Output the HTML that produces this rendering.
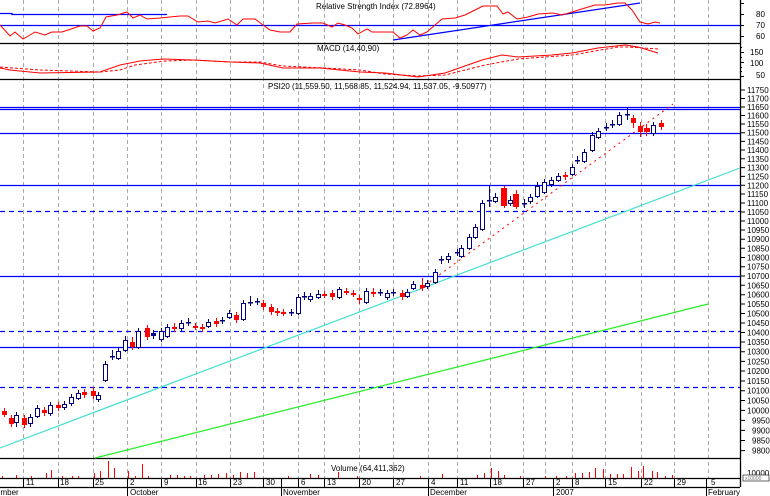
<!DOCTYPE html>
<html><head><meta charset="utf-8"><style>
html,body{margin:0;padding:0;background:#fff;}
svg{display:block;font-family:"Liberation Sans",sans-serif;}
text{font-size:8px;fill:#000;}
</style></head><body>
<svg width="770" height="496" viewBox="0 0 770 496" xmlns="http://www.w3.org/2000/svg">
<rect width="770" height="496" fill="#fff"/>
<!-- vertical grid -->
<g stroke="#aaa" stroke-dasharray="4,3" stroke-width="1">
<path d="M23.5 0V478M58.5 0V478M93.5 0V478M127.5 0V478M161.5 0V478M196.5 0V478M230.5 0V478M263.5 0V478M298.5 0V478M324.5 0V478M359.5 0V478M393.5 0V478M428.5 0V478M457.5 0V478M490.5 0V478M523.5 0V478M545.5 0V478M572.5 0V478M605.5 0V478M641.5 0V478M674.5 0V478M708.5 0V478"/>
</g>
<!-- panel separators -->
<g stroke="#000" stroke-width="1.3">
<path d="M0 43.5H740M0 79.5H740M0 458.5H740M0 478.5H740M0 487.5H740M740.5 0V487"/>
</g>
<!-- RSI -->
<text x="316" y="9">Relative Strength Index (72.8964)</text>
<g stroke="#0000ff" stroke-width="1.3" fill="none">
<path d="M0 25.5H740M0 13.5H12L12 14.5H167M393 40L640 3"/>
</g>
<polyline fill="none" stroke="#f00" stroke-width="1" points="0,25 10,36 15,32 23,39 35,32 45,35 52,32 62,32 80,26 87,26 93,31 100,28 106,17 117,15 127,12 133,18 140,15 147,19 160,18 180,16 188,16 198,22 208,21 215,23 228,19 237,25 243,19 255,19 263,25 270,30 280,32 290,32 297,24 313,23 323,23 332,27 338,23 345,25 352,28 358,34 367,29 372,32 385,32 393,32 400,38 407,35 413,30 420,35 427,32 435,25 442,19 455,18 465,15 475,10 483,6 497,6 503,14 508,12 517,19 528,17 538,14 553,13 562,15 572,12 585,8 595,5 605,5 618,3 625,3 632,10 640,22 648,24 655,22 660,23"/>
<text x="756" y="17">80</text><text x="756" y="28">70</text><text x="756" y="39">60</text>
<path d="M740 3.5h4M740 14.5h4M740 25.5h4M740 36.5h4" stroke="#000"/>
<!-- MACD -->
<text x="317" y="51">MACD (14,40,90)</text>
<polyline fill="none" stroke="#f00" stroke-width="1" points="0,68 10,70 40,73 100,72 120,65 140,61 163,59 193,60 230,62 260,63 283,68 320,68 360,72 385,73 418,77 445,73 482,60 502,55 518,57 552,55 572,53 598,48 625,45 638,47 658,53"/>
<polyline fill="none" stroke="#f00" stroke-width="1" stroke-dasharray="3,2" points="0,67 40,70 100,72 120,70 135,65 165,61 195,60 230,62 260,62 283,66 325,68 360,70 385,74 418,76 445,75 485,65 518,59 572,55 618,47 628,47 658,49"/>
<text x="750" y="55">150</text><text x="750" y="66">100</text><text x="756" y="78">50</text>
<path d="M740 52.5h4M740 62.5h4M740 76.5h4M740 47.5h2M740 57.5h2M740 67.5h2M740 71.5h2" stroke="#000"/>
<!-- Price -->
<text x="268" y="89">PSI20 (11,559.50, 11,568.85, 11,524.94, 11,537.05, -9.50977)</text>
<g stroke="#0000ff" stroke-width="1.3" fill="none">
<path d="M0 107.5H740M0 109.5H740M0 133.5H740M0 185.5H740M0 276.5H740M0 347.5H740"/>
<path d="M0 211.5H740M0 331.5H740M0 387.5H740" stroke-dasharray="5,4"/>
</g>
<path d="M0 448L740 168" stroke="#40e0d0" stroke-width="1.2" fill="none"/>
<path d="M95 458L708 304" stroke="#22ee22" stroke-width="1.2" fill="none"/>
<path d="M420 289L673 104" stroke="#f00" stroke-width="1" stroke-dasharray="2,4" fill="none"/>
<!-- wicks -->
<path stroke="#000080" stroke-width="1" fill="none" d="M16.5 412V427M30.5 414V427M37.5 405V418M50.5 402V416M64.5 401V410M71.5 394V406M78.5 390V400M98.5 392V402M105.5 361V382M112.5 350V360M118.5 348V360M125.5 336V352M138.5 328V349M153.5 330V339M161.5 328V342M167.5 324V338M181.5 320V331M188.5 318V326M208.5 319V328M222.5 317V324M229.5 310V319M243.5 300V321M250.5 296V306M257.5 298V305M291.5 309V316M298.5 294V315M304.5 292V300M310.5 293V302M318.5 290V299M339.5 287V299M366.5 288V304M380.5 289V296M387.5 290V300M393.5 289V296M407.5 289V298M413.5 281V290M427.5 280V289M435.5 269V284M441.5 256V264M448.5 253V263M457.5 249V256M461.5 245V258M469.5 234V250M475.5 224V239M482.5 200V231M489.5 186V207M495.5 193V203M510.5 196V206M524.5 199V208M530.5 194V204M537.5 182V198M544.5 179V194M551.5 177V187M558.5 173V182M572.5 164V176M577.5 156V164M584.5 149V163M592.5 132V152M598.5 128V139M606.5 123V131M612.5 120V128M619.5 112V126M627.5 108V120M653.5 122V136"/>
<path stroke="#f00" stroke-width="1" fill="none" d="M4.5 408V417M11.5 415V427M24.5 415V428M44.5 407V416M58.5 402V411M84.5 389V398M93.5 387V399M132.5 337V350M147.5 325V340M174.5 323V332M195.5 323V330M202.5 324V332M216.5 318V327M236.5 312V323M263.5 300V310M271.5 304V315M277.5 308V316M283.5 309V316M324.5 291V298M332.5 290V300M346.5 288V295M353.5 290V297M359.5 295V304M373.5 288V297M402.5 290V300M422.5 278V291M504.5 186V208M516.5 190V209M565.5 172V180M633.5 115V128M640.5 122V137M646.5 124V136M661.5 120V130"/>
<!-- red bodies -->
<g fill="#f00">
<rect x="2" y="411" width="5" height="4"/><rect x="9" y="418" width="5" height="6"/><rect x="22" y="418" width="5" height="7"/><rect x="42" y="410" width="5" height="3"/><rect x="56" y="405" width="5" height="3"/><rect x="82" y="392" width="5" height="3"/><rect x="91" y="391" width="5" height="5"/><rect x="130" y="342" width="5" height="5"/><rect x="145" y="328" width="5" height="9"/><rect x="172" y="327" width="5" height="2"/><rect x="193" y="326" width="5" height="2"/><rect x="200" y="327" width="5" height="2"/><rect x="214" y="321" width="5" height="3"/><rect x="234" y="315" width="5" height="5"/><rect x="261" y="303" width="5" height="4"/><rect x="269" y="307" width="5" height="5"/><rect x="275" y="311" width="5" height="2"/><rect x="281" y="312" width="5" height="2"/><rect x="322" y="294" width="5" height="2"/><rect x="330" y="293" width="5" height="4"/><rect x="344" y="291" width="5" height="2"/><rect x="351" y="293" width="5" height="2"/><rect x="357" y="298" width="5" height="2"/><rect x="371" y="292" width="5" height="2"/><rect x="400" y="293" width="5" height="4"/><rect x="420" y="285" width="5" height="3"/><rect x="501" y="188" width="6" height="18"/><rect x="513" y="194" width="6" height="13"/><rect x="563" y="175" width="5" height="2"/><rect x="631" y="118" width="5" height="5"/><rect x="638" y="126" width="5" height="6"/><rect x="644" y="128" width="6" height="4"/><rect x="659" y="123" width="5" height="4"/>
</g>
<!-- navy filled -->
<g fill="#000080">
<rect x="110" y="356" width="5" height="1.5"/><rect x="151" y="333" width="5" height="3"/><rect x="186" y="322" width="5" height="1.5"/><rect x="220" y="320" width="5" height="1.5"/><rect x="248" y="302" width="5" height="1.5"/><rect x="255" y="301" width="5" height="1.5"/><rect x="289" y="312" width="5" height="1.5"/><rect x="302" y="296" width="5" height="1.5"/><rect x="378" y="292" width="5" height="1.5"/><rect x="391" y="292" width="5" height="1.5"/><rect x="439" y="259" width="5" height="1.5"/><rect x="455" y="252" width="5" height="1.5"/><rect x="487" y="200" width="5" height="1.5"/><rect x="522" y="203" width="5" height="1.5"/><rect x="575" y="160" width="5" height="1.5"/><rect x="604" y="127" width="5" height="1.5"/><rect x="610" y="124" width="5" height="1.5"/><rect x="625" y="114" width="5" height="1.5"/>
</g>
<!-- hollow bodies -->
<g fill="#fff" stroke="#000080" stroke-width="1">
<rect x="14.5" y="415.5" width="4" height="7"/><rect x="28.5" y="417.5" width="4" height="6"/><rect x="35.5" y="408.5" width="4" height="8"/><rect x="48.5" y="405.5" width="4" height="8"/><rect x="62.5" y="404.5" width="4" height="3"/><rect x="69.5" y="397.5" width="4" height="6"/><rect x="76.5" y="393.5" width="4" height="5"/><rect x="96.5" y="395.5" width="4" height="4"/><rect x="103.5" y="364.5" width="4" height="16"/><rect x="116.5" y="351.5" width="4" height="7"/><rect x="123.5" y="340.5" width="4" height="10"/><rect x="136.5" y="331.5" width="4" height="16"/><rect x="159.5" y="331.5" width="4" height="8"/><rect x="165.5" y="327.5" width="4" height="9"/><rect x="179.5" y="323.5" width="4" height="5"/><rect x="206.5" y="322.5" width="4" height="4"/><rect x="227.5" y="313.5" width="4" height="4"/><rect x="241.5" y="303.5" width="4" height="16"/><rect x="296.5" y="297.5" width="4" height="16"/><rect x="308.5" y="296.5" width="4" height="3"/><rect x="316.5" y="294.5" width="4" height="3"/><rect x="337.5" y="289.5" width="4" height="8"/><rect x="364.5" y="291.5" width="4" height="11"/><rect x="385.5" y="293.5" width="4" height="4"/><rect x="405.5" y="292.5" width="4" height="4"/><rect x="411.5" y="284.5" width="4" height="4"/><rect x="425.5" y="283.5" width="4" height="3"/><rect x="433.5" y="272.5" width="4" height="10"/><rect x="446.5" y="256.5" width="4" height="3"/><rect x="459.5" y="248.5" width="4" height="8"/><rect x="467.5" y="237.5" width="4" height="11"/><rect x="473.5" y="227.5" width="4" height="10"/><rect x="480.5" y="203.5" width="4" height="26"/><rect x="493.5" y="197.5" width="4" height="4"/><rect x="508.5" y="200.5" width="4" height="3"/><rect x="528.5" y="197.5" width="4" height="4"/><rect x="535.5" y="186.5" width="4" height="10"/><rect x="542.5" y="182.5" width="4" height="10"/><rect x="549.5" y="180.5" width="4" height="4"/><rect x="556.5" y="176.5" width="4" height="4"/><rect x="570.5" y="167.5" width="4" height="7"/><rect x="582.5" y="152.5" width="4" height="9"/><rect x="590.5" y="135.5" width="4" height="15"/><rect x="596.5" y="131.5" width="4" height="6"/><rect x="617.5" y="115.5" width="4" height="9"/><rect x="651.5" y="125.5" width="4" height="8"/>
</g>
<!-- price axis -->
<g stroke="#000" stroke-width="1">
<path d="M740 90h5M740 98.5h5M740 107h5M740 115.5h5M740 124h5M740 132.7h5M740 141.4h5M740 150h5M740 158.8h5M740 167.6h5M740 176.4h5M740 185.3h5M740 194h5M740 203h5M740 212h5M740 221h5M740 230h5M740 239.2h5M740 248.3h5M740 257.5h5M740 266.7h5M740 276h5M740 285.3h5M740 294.7h5M740 304h5M740 313.5h5M740 323h5M740 332.5h5M740 342h5M740 351.7h5M740 361.4h5M740 371h5M740 381h5M740 390.7h5M740 400.5h5M740 410.4h5M740 420.4h5M740 430.4h5M740 440.5h5M740 450.6h5"/>
</g>
<g>
<text x="747" y="93">11750</text><text x="747" y="101.5">11700</text><text x="747" y="110">11650</text><text x="747" y="118.5">11600</text><text x="747" y="127">11550</text><text x="747" y="135.7">11500</text><text x="747" y="144.4">11450</text><text x="747" y="153">11400</text><text x="747" y="161.8">11350</text><text x="747" y="170.6">11300</text><text x="747" y="179.4">11250</text><text x="747" y="188.3">11200</text><text x="747" y="197">11150</text><text x="747" y="206">11100</text><text x="747" y="215">11050</text><text x="747" y="224">11000</text><text x="747" y="233">10950</text><text x="747" y="242.2">10900</text><text x="747" y="251.3">10850</text><text x="747" y="260.5">10800</text><text x="747" y="269.7">10750</text><text x="747" y="279">10700</text><text x="747" y="288.3">10650</text><text x="747" y="297.7">10600</text><text x="747" y="307">10550</text><text x="747" y="316.5">10500</text><text x="747" y="326">10450</text><text x="747" y="335.5">10400</text><text x="747" y="345">10350</text><text x="747" y="354.7">10300</text><text x="747" y="364.4">10250</text><text x="747" y="374">10200</text><text x="747" y="384">10150</text><text x="747" y="393.7">10100</text><text x="747" y="403.5">10050</text><text x="747" y="413.4">10000</text><text x="752" y="423.4">9950</text><text x="752" y="433.4">9900</text><text x="752" y="443.5">9850</text><text x="752" y="453.6">9800</text>
</g>
<!-- volume -->
<text x="331" y="471">Volume (64,411,362)</text>
<path stroke="#f00" stroke-width="1" fill="none" d="M2.5 478V476M16.5 478V475M31.5 478V476M46.5 478V473M51.5 478V470M62.5 478V476M72.5 478V476M78.5 478V476M94.5 478V473M100.5 478V471M108.5 478V461M114.5 478V468M128.5 478V471M135.5 478V476M142.5 478V464M148.5 478V476M170.5 478V475M177.5 478V475M184.5 478V476M190.5 478V476M204.5 478V475M211.5 478V475M218.5 478V474M226.5 478V473M233.5 478V475M240.5 478V472M247.5 478V473M254.5 478V472M288.5 478V476M310.5 478V474M318.5 478V475M338.5 478V472M357.5 478V476M420.5 478V476M442.5 478V474M477.5 478V475M484.5 478V473M491.5 478V468M498.5 478V471M504.5 478V475M520.5 478V476M545.5 478V476M556.5 478V476M566.5 478V476M575.5 478V473M582.5 478V473M589.5 478V472M595.5 478V468M603.5 478V469M610.5 478V474M617.5 478V474M623.5 478V474M631.5 478V467M638.5 478V471M643.5 478V466M652.5 478V471M657.5 478V472M665.5 478V476M672.5 478V475"/>
<text x="747" y="476">10000</text>
<rect x="743" y="475" width="26" height="6" fill="#fff" stroke="#000" stroke-width="0.6"/>
<text x="745" y="480" style="font-size:5px;fill:#777">x10000</text>
<!-- date axis -->
<g stroke="#000" stroke-width="1"><path d="M23.5 478V487M58.5 478V487M93.5 478V487M127.5 478V496M161.5 478V487M196.5 478V487M230.5 478V487M263.5 478V487M281.5 478V496M298.5 478V487M324.5 478V487M359.5 478V487M393.5 478V487M428.5 478V496M457.5 478V487M490.5 478V487M523.5 478V487M553.5 478V496M572.5 478V487M605.5 478V487M641.5 478V487M674.5 478V487M706.5 478V496M740.5 478V487"/></g>
<g>
<text x="26" y="485">11</text><text x="60" y="485">18</text><text x="95" y="485">25</text><text x="130" y="485">2</text><text x="164" y="485">9</text><text x="198" y="485">16</text><text x="233" y="485">23</text><text x="266" y="485">30</text><text x="301" y="485">6</text><text x="327" y="485">13</text><text x="362" y="485">20</text><text x="396" y="485">27</text><text x="431" y="485">4</text><text x="460" y="485">11</text><text x="493" y="485">18</text><text x="526" y="485">27</text><text x="556" y="485">2</text><text x="575" y="485">8</text><text x="608" y="485">15</text><text x="644" y="485">22</text><text x="677" y="485">29</text><text x="711" y="485">5</text>
<text x="-4" y="495">ember</text><text x="130" y="495">October</text><text x="283" y="495">November</text><text x="430" y="495">December</text><text x="556" y="495">2007</text><text x="708" y="495">February</text>
</g>
</svg>
</body></html>
